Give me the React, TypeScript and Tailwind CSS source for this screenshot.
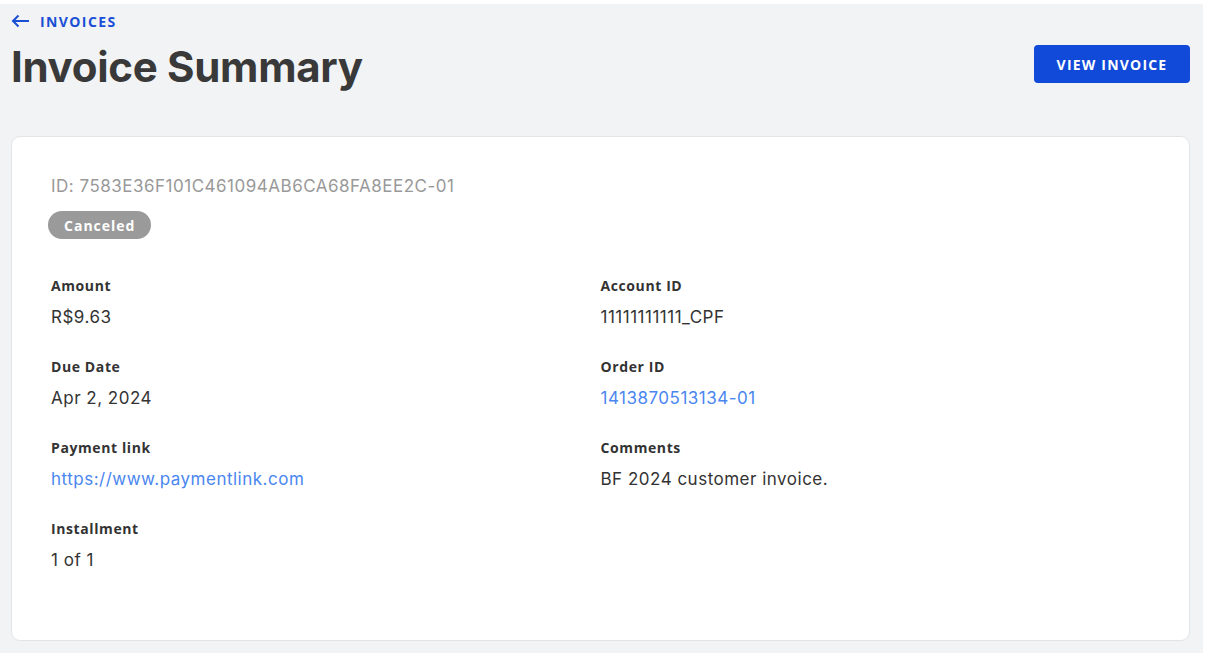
import React from 'react';

const font = { fontFamily: '"Open Sans", "Noto Sans", sans-serif' };
const valueFont = { fontFamily: 'Inter, "Noto Sans", sans-serif' };

interface FieldProps {
  label: string;
  value: string;
  link?: boolean;
}

const Field: React.FC<FieldProps> = ({ label, value, link }) => (
  <div className="h-[81px]">
    <div className="text-[14px] font-bold leading-[20px] tracking-[0.6px] text-[#333]">{label}</div>
    <div
      className={
        'mt-[11px] text-[17px] leading-[20px] tracking-[0.5px] ' +
        (link ? 'text-[#4a86f0]' : 'text-[#333]')
      }
      style={valueFont}
    >
      {value}
    </div>
  </div>
);

export default function App() {
  return (
    <div className="h-[661px] w-[1212px] bg-white" style={font}>
      <div className="mt-[4px] h-[649px] w-[1203px] bg-[#f2f3f5] px-[11px] pt-[7px]">
        <a className="flex h-[20px] items-center gap-[10px] text-[14px] font-bold tracking-[1.4px] text-[#1a4fd6]">
          <svg width="19" height="14" viewBox="0 0 19 14" fill="none" stroke="#1a4fd6" strokeWidth="2">
            <path d="M18 7H2M7.5 1.5 2 7l5.5 5.5" />
          </svg>
          INVOICES
        </a>
        <div className="mt-[10px] flex items-start justify-between">
          <h1
            className="text-[42px] font-bold leading-[52px] tracking-[-0.3px] text-[#393939]"
            style={{ fontFamily: 'Inter, sans-serif' }}
          >
            Invoice Summary
          </h1>
          <button className="mr-[2px] mt-[4px] h-[38px] w-[156px] rounded-[4px] bg-[#1149d8] text-[14px] font-bold tracking-[1.2px] text-white">
            VIEW INVOICE
          </button>
        </div>
        <div className="mr-[2px] mt-[43px] h-[505px] rounded-[9px] border border-[#e3e4e6] bg-white px-[39px] pt-[39px]">
          <div className="text-[17px] leading-[20px] tracking-[0.5px] text-[#999]" style={valueFont}>
            ID: 7583E36F101C461094AB6CA68FA8EE2C-01
          </div>
          <span className="ml-[-3px] mt-[15px] inline-flex h-[28px] items-center rounded-full bg-[#9a9a9a] px-[16px] text-[14px] font-bold tracking-[1px] text-white">
            Canceled
          </span>
          <div className="mt-[37px] grid grid-cols-2">
            <div>
              <Field label="Amount" value="R$9.63" />
              <Field label="Due Date" value="Apr 2, 2024" />
              <Field label="Payment link" value="https://www.paymentlink.com" link />
              <Field label="Installment" value="1 of 1" />
            </div>
            <div>
              <Field label="Account ID" value="11111111111_CPF" />
              <Field label="Order ID" value="1413870513134-01" link />
              <Field label="Comments" value="BF 2024 customer invoice." />
            </div>
          </div>
        </div>
      </div>
    </div>
  );
}
